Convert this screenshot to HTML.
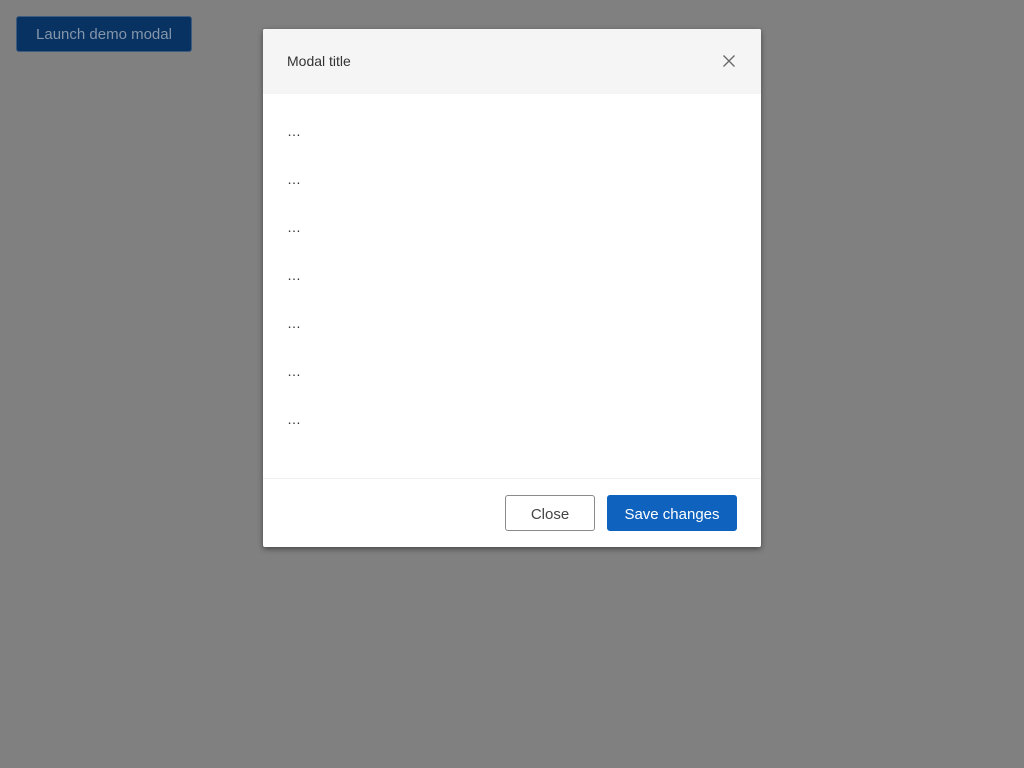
<!DOCTYPE html>
<html><head><style>
html,body{margin:0;padding:0;width:1024px;height:768px;background:#808080;font-family:"Liberation Sans",sans-serif;overflow:hidden;position:relative}
.launch{position:absolute;left:16px;top:16px;width:176px;height:36px;box-sizing:border-box;background:#073261;border:1px solid #3d5a7f;border-radius:3px;color:#8595aa;font-size:15px;line-height:36px;text-align:center}
.modal{position:absolute;left:263px;top:29px;width:498px;height:518px;background:#fff;border-radius:2px;box-shadow:0 2px 6px rgba(0,0,0,.45);overflow:hidden}
.hd{height:65px;background:#f5f5f5;position:relative}
.hd .t{position:absolute;left:24px;top:24px;font-size:14px;color:#333}
.x{position:absolute;left:459px;top:25px}
.dots{position:absolute;left:24px;font-size:14px;color:#333}
.ft{position:absolute;left:0;right:0;top:449px;border-top:1px solid #eee}
.b{position:absolute;top:466px;height:36px;box-sizing:border-box;border-radius:3px;font-size:15px;text-align:center;line-height:37px}
.c{left:242px;width:90px;border:1px solid #8a8a8a;color:#444}
.s{left:344px;width:130px;background:#0f62bd;border:1px solid #0f62bd;color:#fff}
</style></head><body>
<div class="launch">Launch demo modal</div>
<div class="modal">
<div class="hd"><span class="t">Modal title</span>
<svg class="x" width="14" height="14" viewBox="0 0 14 14"><path d="M1.5 1.5L12.5 12.5M12.5 1.5L1.5 12.5" stroke="#666" stroke-width="1.3"/></svg></div>
<div class="dots" style="top:94px">…</div>
<div class="dots" style="top:142px">…</div>
<div class="dots" style="top:190px">…</div>
<div class="dots" style="top:238px">…</div>
<div class="dots" style="top:286px">…</div>
<div class="dots" style="top:334px">…</div>
<div class="dots" style="top:382px">…</div>
<div class="ft"></div>
<div class="b c">Close</div>
<div class="b s">Save changes</div>
</div>
</body></html>
